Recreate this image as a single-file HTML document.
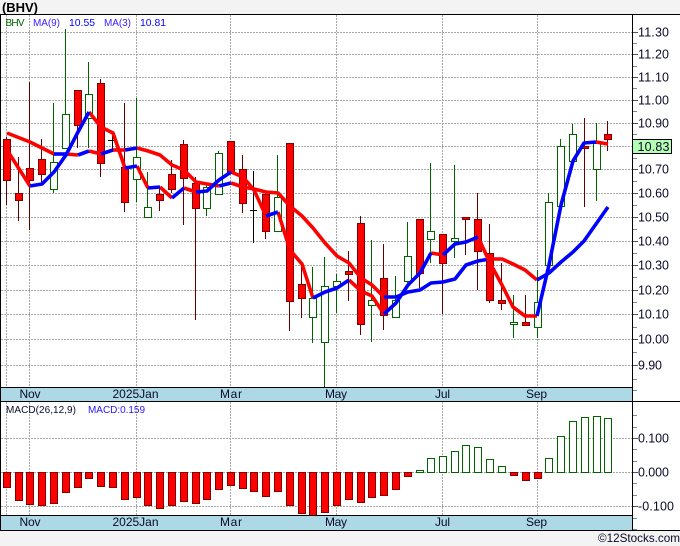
<!DOCTYPE html>
<html><head><meta charset="utf-8"><style>
html,body{margin:0;padding:0;background:#f3f3f3}
svg{display:block}
text{font-family:"Liberation Sans",sans-serif;font-size:12.5px;fill:#0a0a28}
text.b{font-size:12px}
</style></head><body>
<svg width="680" height="546" viewBox="0 0 680 546" xmlns="http://www.w3.org/2000/svg">
<rect width="680" height="546" fill="#f3f3f3"/>
<rect x="0" y="14" width="680" height="517" fill="#fff"/>
<rect x="0" y="387" width="632" height="14" fill="#add8e6"/>
<rect x="0" y="515" width="632" height="15" fill="#add8e6"/>
<g stroke="#a8a8a8" fill="none" stroke-dasharray="2 1">
<path d="M1 32.5H632M1 54.5H632M1 77.5H632M1 100.5H632M1 123.5H632M1 146.5H632M1 169.5H632M1 193.5H632M1 217.5H632M1 241.5H632M1 265.5H632M1 290.5H632M1 314.5H632M1 339.5H632M1 365.5H632M1 438.5H632M1 472.5H632M1 506.5H632"/>
<path d="M6.5 15V387M29.5 15V387M136.5 15V387M230.5 15V387M336.5 15V387M442.5 15V387M537.5 15V387M6.5 402V515M29.5 402V515M136.5 402V515M230.5 402V515M336.5 402V515M442.5 402V515M537.5 402V515"/>
</g>
<g fill="none" stroke="#640000">
<path d="M6.5 137V205M18.5 157V221M29.5 82V230M41.5 139V182M77.5 90V148M100.5 79V177M124.5 103V212M159.5 187V211M171.5 160V193M183.5 140V225M195.5 177V320M230.5 141V172M242.5 155V213M265.5 190V239M289.5 143V331M301.5 263V318M348.5 251V301M360.5 216V335M383.5 244V330M419.5 219V288M442.5 234V314M465.5 217V255M477.5 193V290M489.5 224V303M501.5 263V310M525.5 295V325M584.5 118V207M607.5 121V151"/>
</g>
<g fill="none" stroke="#006400">
<path d="M53.5 103V193M65.5 29V148M88.5 62V148M136.5 98V202M147.5 172V217M206.5 185V216M218.5 151V194M277.5 155V231M312.5 267V343M324.5 257V387M336.5 274V313M371.5 240V342M395.5 276V317M407.5 222V283M430.5 163V263M454.5 165V258M513.5 295V338M537.5 270V338M548.5 193V265M560.5 139V206M572.5 124V161M596.5 123V201"/>
</g>
<path d="M112.5 133V150M108 140.5H116M253.5 171V243M250 210.5H257" fill="none" stroke="#000"/>
<path fill="#f00" stroke="#800000" d="M3.5 139.5h7v41h-7zM15.5 193.5h7v7h-7zM26.5 168.5h7v12h-7zM38.5 159.5h7v15h-7zM74.5 90.5h7v35h-7zM97.5 83.5h7v80h-7zM121.5 167.5h7v35h-7zM156.5 194.5h7v6h-7zM168.5 174.5h7v15h-7zM180.5 144.5h7v34h-7zM192.5 183.5h7v25h-7zM227.5 141.5h7v31h-7zM239.5 169.5h7v34h-7zM262.5 194.5h7v37h-7zM286.5 143.5h7v158h-7zM298.5 284.5h7v14h-7zM345.5 271.5h7v3h-7zM357.5 223.5h7v101h-7zM380.5 278.5h7v37h-7zM416.5 219.5h7v54h-7zM439.5 234.5h7v29h-7zM462.5 217.5h7v2h-7zM474.5 219.5h7v32h-7zM486.5 253.5h7v47h-7zM498.5 300.5h7v3h-7zM522.5 322.5h7v3h-7zM581.5 146.5h7v2h-7zM604.5 134.5h7v5h-7z"/>
<path fill="#fff" stroke="#006400" d="M50.5 162.5h7v27h-7zM62.5 114.5h7v34h-7zM85.5 94.5h7v24h-7zM133.5 157.5h7v22h-7zM144.5 207.5h7v10h-7zM203.5 187.5h7v21h-7zM215.5 153.5h7v41h-7zM274.5 197.5h7v34h-7zM309.5 298.5h7v19h-7zM321.5 286.5h7v56h-7zM333.5 281.5h7v5h-7zM368.5 300.5h7v5h-7zM392.5 300.5h7v17h-7zM404.5 256.5h7v25h-7zM427.5 231.5h7v8h-7zM451.5 238.5h7v3h-7zM510.5 322.5h7v2h-7zM534.5 302.5h7v25h-7zM545.5 202.5h7v63h-7zM557.5 146.5h7v60h-7zM569.5 134.5h7v27h-7zM593.5 143.5h7v26h-7z"/>
<g fill="none" stroke-width="3.6" stroke-linejoin="round">
<g stroke="#f00">
<polyline points="7,133 30,142 54,154"/><polyline points="66,154 78,155"/><polyline points="89,151 101,154"/><polyline points="113,150 125,150"/>
<polyline points="137,148 148,151 160,155 172,165 184,170 196,182 207,184 219,186"/>
<polyline points="231,183 243,187 254,189 266,192 278,193 290,206 302,216 313,228 325,243 337,256 349,263 361,278 372,285 384,297"/>
<polyline points="490,259 502,259 513,264 525,270 537,280"/>
</g>
<g stroke="#00f">
<polyline points="54,154 66,154"/><polyline points="78,155 89,151"/><polyline points="101,154 113,150"/><polyline points="125,150 137,148"/><polyline points="219,186 231,183"/>
<polyline points="384,297 396,297 408,292 420,290 431,283 443,282 455,279 466,265 478,261 490,259"/>
<polyline points="537,280 549,273 561,262 573,252 584,241 596,224 608,207"/>
</g>
<g stroke="#f00">
<polyline points="7,150 30,186"/><polyline points="89,112 101,127 113,133 125,168"/><polyline points="137,166 148,188"/><polyline points="160,187 172,198"/><polyline points="184,188 196,192"/>
<polyline points="231,172 243,177 254,190 266,216"/><polyline points="278,212 290,250 302,264 313,298"/>
<polyline points="349,280 361,291 372,296 384,314"/><polyline points="431,253 443,255"/>
<polyline points="478,237 490,263 502,285 513,307 525,316 537,316"/><polyline points="596,142 608,144"/>
</g>
<g stroke="#00f">
<polyline points="30,186 42,184 54,172 66,155 78,132 89,112"/><polyline points="125,168 137,166"/><polyline points="148,188 160,187"/><polyline points="172,198 184,188"/><polyline points="196,192 207,191 219,180 231,172"/>
<polyline points="266,216 278,212"/><polyline points="313,298 325,292 337,288 349,280"/>
<polyline points="384,314 396,303 408,285 420,273 431,253"/><polyline points="443,255 455,244 466,242 478,237"/>
<polyline points="537,316 549,265 561,205 573,161 584,143 596,142"/>
</g>
</g>
<path fill="#f00" stroke="#800000" d="M3.5 472.5h7v15h-7zM15.5 472.5h7v28h-7zM26.5 472.5h7v32h-7zM38.5 472.5h7v33h-7zM50.5 472.5h7v31h-7zM62.5 472.5h7v20h-7zM74.5 472.5h7v15h-7zM85.5 472.5h7v6h-7zM97.5 472.5h7v14h-7zM109.5 472.5h7v15h-7zM121.5 472.5h7v27h-7zM133.5 472.5h7v25h-7zM144.5 472.5h7v33h-7zM156.5 472.5h7v36h-7zM168.5 472.5h7v33h-7zM180.5 472.5h7v29h-7zM192.5 472.5h7v31h-7zM203.5 472.5h7v27h-7zM215.5 472.5h7v17h-7zM227.5 472.5h7v13h-7zM239.5 472.5h7v16h-7zM250.5 472.5h7v19h-7zM262.5 472.5h7v24h-7zM274.5 472.5h7v19h-7zM286.5 472.5h7v33h-7zM298.5 472.5h7v41h-7zM309.5 472.5h7v43h-7zM321.5 472.5h7v40h-7zM333.5 472.5h7v33h-7zM345.5 472.5h7v27h-7zM357.5 472.5h7v30h-7zM368.5 472.5h7v25h-7zM380.5 472.5h7v23h-7zM392.5 472.5h7v17h-7zM404.5 472.5h7v4h-7zM510.5 472.5h7v3h-7zM522.5 472.5h7v8h-7zM534.5 472.5h7v6h-7z"/>
<path fill="#fff" stroke="#006400" d="M416.5 470.5h7v2h-7zM427.5 458.5h7v14h-7zM439.5 456.5h7v16h-7zM451.5 451.5h7v21h-7zM462.5 445.5h7v27h-7zM474.5 447.5h7v25h-7zM486.5 459.5h7v13h-7zM498.5 466.5h7v6h-7zM545.5 458.5h7v14h-7zM557.5 436.5h7v36h-7zM569.5 421.5h7v51h-7zM581.5 417.5h7v55h-7zM593.5 416.5h7v56h-7zM604.5 418.5h7v54h-7z"/>
<g stroke="#000" fill="none">
<path d="M0 14.5H680M0 387.5H632M0 401.5H680M0 515.5H632M0 530.5H680M632.5 14V531M0.5 14V531"/>
</g>
<g stroke="#555" fill="none">
<path d="M633 32.5h5M633 54.5h5M633 77.5h5M633 100.5h5M633 123.5h5M633 146.5h5M633 169.5h5M633 193.5h5M633 217.5h5M633 241.5h5M633 265.5h5M633 290.5h5M633 314.5h5M633 339.5h5M633 365.5h5M633 438.5h5M633 472.5h5M633 506.5h5"/>
<path stroke="#888" d="M633 43.5h4M633 66.5h4M633 88.5h4M633 111.5h4M633 134.5h4M633 158.5h4M633 181.5h4M633 205.5h4M633 229.5h4M633 253.5h4M633 277.5h4M633 302.5h4M633 327.5h4M633 352.5h4M633 379.5h4M633 390.5h4M633 415.5h4M633 427.5h4M633 449.5h4M633 461.5h4M633 483.5h4M633 495.5h4M633 518.5h4M633 529.5h4"/>
</g>
<rect x="632.5" y="139.5" width="39" height="14" fill="#b4ffb4" stroke="#000"/>
<text x="2" y="12" font-weight="bold" style="font-size:13px;fill:#000" textLength="36">(BHV)</text>
<text x="5.5" y="26" style="font-size:10px;fill:#006400" textLength="19">BHV</text>
<text x="33" y="26" style="font-size:10px;fill:#3c20ff" textLength="27">MA(9)</text>
<text x="69" y="26" style="font-size:10.4px;fill:#0000ff" textLength="26">10.55</text>
<text x="104" y="26" style="font-size:10px;fill:#3c20ff" textLength="27">MA(3)</text>
<text x="140" y="26" style="font-size:10.4px;fill:#0000ff" textLength="26">10.81</text>
<text x="6" y="413" style="font-size:10px" textLength="70">MACD(26,12,9)</text>
<text x="88" y="413" style="font-size:10px;fill:#2418ff" textLength="57">MACD:0.159</text>
<g>
<text x="638" y="36.5" textLength="31">11.30</text><text x="638" y="58.5" textLength="31">11.20</text><text x="638" y="81.5" textLength="31">11.10</text><text x="638" y="104.5" textLength="31">11.00</text><text x="638" y="127.5" textLength="31">10.90</text><text x="637.5" y="151" textLength="32">10.83</text><text x="638" y="173.5" textLength="31">10.70</text><text x="638" y="197.5" textLength="31">10.60</text><text x="638" y="221.5" textLength="31">10.50</text><text x="638" y="245.5" textLength="31">10.40</text><text x="638" y="269.5" textLength="31">10.30</text><text x="638" y="294.5" textLength="31">10.20</text><text x="638" y="318.5" textLength="31">10.10</text><text x="638" y="343.5" textLength="31">10.00</text><text x="638" y="369.5" textLength="24">9.90</text>
<text x="638" y="442.5" textLength="31">0.100</text><text x="638" y="476.5" textLength="31">0.000</text><text x="638" y="510.5" textLength="36">-0.100</text>
<text class="b" x="19.5" y="398" textLength="21">Nov</text><text class="b" x="112.5" y="398" textLength="46">2025Jan</text><text class="b" x="220" y="398" textLength="22">Mar</text><text class="b" x="325" y="398" textLength="22">May</text><text class="b" x="435" y="398" textLength="15">Jul</text><text class="b" x="526" y="398" textLength="21">Sep</text>
<text class="b" x="19.5" y="526" textLength="21">Nov</text><text class="b" x="112.5" y="526" textLength="46">2025Jan</text><text class="b" x="220" y="526" textLength="22">Mar</text><text class="b" x="325" y="526" textLength="22">May</text><text class="b" x="435" y="526" textLength="15">Jul</text><text class="b" x="526" y="526" textLength="21">Sep</text>
</g>
<text x="598" y="542" style="font-size:11.7px" textLength="82">©12Stocks.com</text>
</svg>
</body></html>
